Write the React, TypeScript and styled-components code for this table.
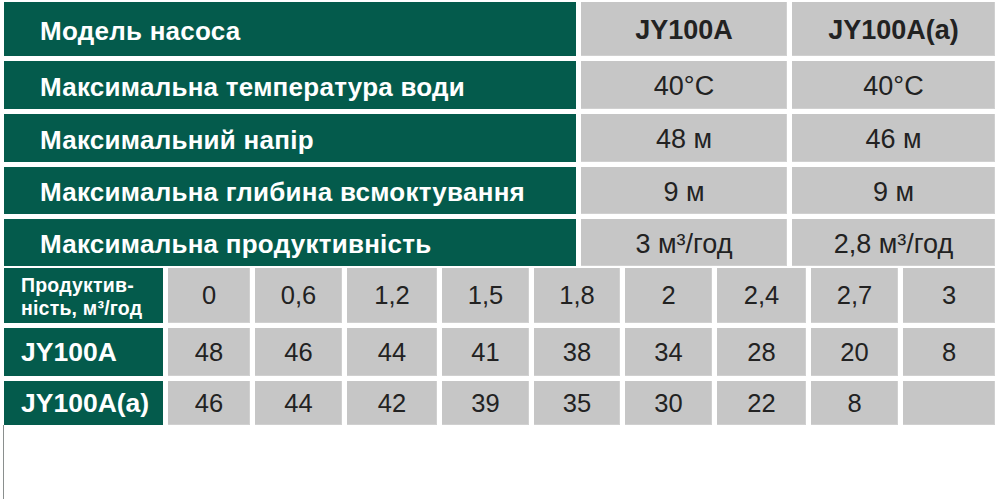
import React from 'react';
import styled, { createGlobalStyle } from 'styled-components';

const GlobalStyle = createGlobalStyle`
  html, body {
    margin: 0;
    padding: 0;
    background: #ffffff;
  }
  body {
    font-family: 'Liberation Sans', Arial, sans-serif;
  }
`;

const GREEN = '#045b4c';
const GRAY = '#c6c6c6';

const Page = styled.div`
  padding: 2px 5px 0 4px;
  width: 1000px;
  box-sizing: border-box;
`;

const SpecTable = styled.div`
  display: grid;
  grid-template-columns: 572px 206px 203px;
  grid-template-rows: 54px 48px 48px 47px 47px;
  gap: 5px;
`;

const FlowTable = styled.div`
  display: grid;
  grid-template-columns: 159px 82px 87px 90px 87px 86px 87px 89px 87px 92px;
  grid-template-rows: 55px 48px 44px;
  gap: 5px;
  margin-top: 2px;
`;

const Label = styled.div`
  background: ${GREEN};
  color: #ffffff;
  font-weight: bold;
  font-size: 26px;
  letter-spacing: 0.25px;
  display: flex;
  align-items: center;
  padding-left: 36px;
  padding-top: 4px;
  box-sizing: border-box;
`;

const RowHead = styled.div<{ $small?: boolean }>`
  background: ${GREEN};
  color: #ffffff;
  font-weight: bold;
  font-size: ${(p) => (p.$small ? '19.5px' : '26.5px')};
  line-height: ${(p) => (p.$small ? '23px' : '1')};
  letter-spacing: ${(p) => (p.$small ? '0.2px' : '0')};
  display: flex;
  align-items: center;
  padding-left: 17px;
  padding-top: ${(p) => (p.$small ? '2px' : '0')};
  box-sizing: border-box;
`;

const Value = styled.div<{ $bold?: boolean }>`
  background: ${GRAY};
  box-shadow: inset -1px -1px 0 #d0d0d0;
  color: #222222;
  font-weight: ${(p) => (p.$bold ? 'bold' : 'normal')};
  font-size: 27px;
  display: flex;
  align-items: center;
  justify-content: center;
  padding-top: 3px;
  box-sizing: border-box;
`;

const Cell = styled.div`
  background: ${GRAY};
  box-shadow: inset -1px -1px 0 #d0d0d0;
  color: #222222;
  font-size: 25.5px;
  display: flex;
  align-items: center;
  justify-content: center;
`;

const Trace = styled.div`
  margin-left: -1px;
  width: 0;
  height: 74px;
  border-left: 1px solid #8a8f8e;
`;

const specs: [string, string, string][] = [
  ['Максимальна температура води', '40°C', '40°C'],
  ['Максимальний напір', '48 м', '46 м'],
  ['Максимальна глибина всмоктування', '9 м', '9 м'],
  ['Максимальна продуктивність', '3 м³/год', '2,8 м³/год'],
];

const flow = ['0', '0,6', '1,2', '1,5', '1,8', '2', '2,4', '2,7', '3'];
const headA = ['48', '46', '44', '41', '38', '34', '28', '20', '8'];
const headB = ['46', '44', '42', '39', '35', '30', '22', '8', ''];

export default function App() {
  return (
    <Page>
      <GlobalStyle />
      <SpecTable>
        <Label>Модель насоса</Label>
        <Value $bold>JY100A</Value>
        <Value $bold>JY100A(a)</Value>
        {specs.map(([name, a, b]) => (
          <React.Fragment key={name}>
            <Label>{name}</Label>
            <Value>{a}</Value>
            <Value>{b}</Value>
          </React.Fragment>
        ))}
      </SpecTable>
      <FlowTable>
        <RowHead $small>
          Продуктив-
          <br />
          ність, м³/год
        </RowHead>
        {flow.map((v, i) => (
          <Cell key={'f' + i}>{v}</Cell>
        ))}
        <RowHead>JY100A</RowHead>
        {headA.map((v, i) => (
          <Cell key={'a' + i}>{v}</Cell>
        ))}
        <RowHead>JY100A(a)</RowHead>
        {headB.map((v, i) => (
          <Cell key={'b' + i}>{v}</Cell>
        ))}
      </FlowTable>
      <Trace />
    </Page>
  );
}
